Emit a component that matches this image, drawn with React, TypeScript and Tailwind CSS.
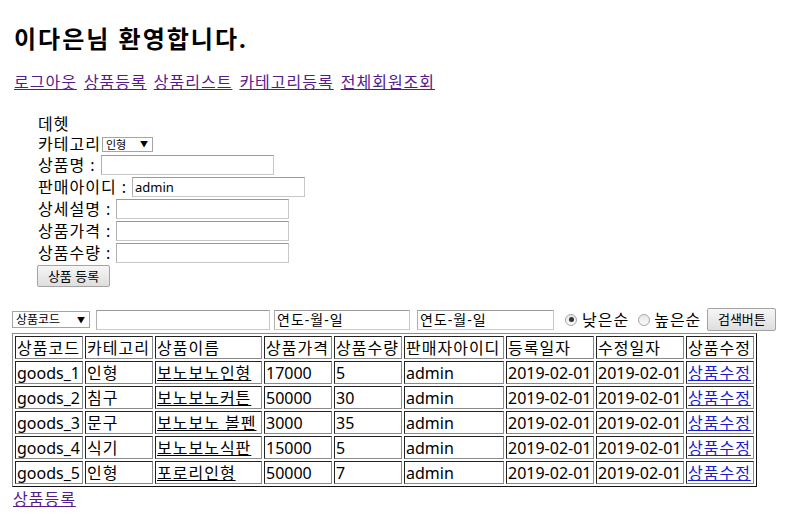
import React from "react";

/* ── data ── */

const NAV = ["로그아웃", "상품등록", "상품리스트", "카테고리등록", "전체회원조회"];

const HEAD = ["상품코드", "카테고리", "상품이름", "상품가격", "상품수량", "판매자아이디", "등록일자", "수정일자", "상품수정"];

const COLS = ["w-[68px]", "w-[68px]", "w-[107px]", "w-[68px]", "w-[68px]", "w-[100px]", "w-[88px]", "w-[88px]", "w-[68px]"];

const ROWS = [
  ["goods_1", "인형", "보노보노인형", "17000", "5"],
  ["goods_2", "침구", "보노보노커튼", "50000", "30"],
  ["goods_3", "문구", "보노보노 볼펜", "3000", "35"],
  ["goods_4", "식기", "보노보노식판", "15000", "5"],
  ["goods_5", "인형", "포로리인형", "50000", "7"],
];

const FIELDS = [
  { label: "상품명 :", value: "" },
  { label: "판매아이디 :", value: "admin" },
  { label: "상세설명 :", value: "" },
  { label: "상품가격 :", value: "" },
  { label: "상품수량 :", value: "" },
];

const CELL =
  "whitespace-nowrap border border-t-[#222] border-l-[#222] border-r-[#8a8a8a] border-b-[#8a8a8a] pt-[2px] pb-0 px-[1px] text-left font-normal leading-[19px]";

/* ── small controls in the old IE look ── */

function FakeSelect({ text, className }: { text: string; className: string }) {
  return (
    <div className={`flex items-center justify-between border border-[#a5a5a5] bg-white pl-[3px] pr-[4px] leading-none tracking-normal ${className}`}>
      <span>{text}</span>
      <span className="text-[8px]">▼</span>
    </div>
  );
}

function Box({ value, className }: { value: string; className: string }) {
  return (
    <input
      readOnly
      value={value}
      className={`h-[20px] border border-t-[#9a9a9a] border-l-[#b0b0b0] border-r-[#c8c8c8] border-b-[#c8c8c8] bg-white px-[2px] text-black outline-none ${className}`}
    />
  );
}

function Radio({ on }: { on: boolean }) {
  return (
    <span className="flex h-[12px] w-[12px] items-center justify-center rounded-full border border-[#a8a8a8] bg-gradient-to-b from-[#e6e6e6] to-[#fafafa]">
      {on && <span className="h-[5px] w-[5px] rounded-full bg-[#333]" />}
    </span>
  );
}

function OldButton({ text, className }: { text: string; className: string }) {
  return (
    <button className={`rounded-[2px] border border-[#a3a3a3] bg-gradient-to-b from-[#f6f6f6] to-[#dedede] text-[13px] leading-none tracking-normal text-black ${className}`}>
      {text}
    </button>
  );
}

export default function App() {
  return (
    <div className="min-h-[530px] bg-white px-[13px] pt-[24px] font-['Noto_Sans','Noto_Sans_CJK_KR',sans-serif] text-[16px] tracking-[1px] text-black">
      {/* ── heading ── */}
      <h1 className="pl-[1px] text-[24px] font-bold leading-[30px] tracking-[2px]">이다은님 환영합니다.</h1>

      {/* ── nav links ── */}
      <div className="mt-[18px] flex gap-[7px] pl-[1px] leading-[21px]">
        {NAV.map((n) => (
          <a key={n} href="#" className="text-[#551a8b] underline">
            {n}
          </a>
        ))}
      </div>

      {/* ── register form ── */}
      <div className="mt-[22px] flex flex-col pl-[25px] leading-[19px]">
        <div className="h-[19px]">데헷</div>
        <div className="flex h-[20px] items-center">
          <span>카테고리</span>
          <FakeSelect text="인형" className="ml-[1px] h-[15px] w-[51px] text-[11px]" />
        </div>
        {FIELDS.map((f) => (
          <div key={f.label} className="flex h-[22px] items-center">
            <span>{f.label}</span>
            <Box value={f.value} className="ml-[5px] w-[173px] text-[13px] tracking-normal" />
          </div>
        ))}
        <div className="pt-[1px]">
          <OldButton text="상품 등록" className="-ml-[1px] h-[22px] w-[73px]" />
        </div>
      </div>

      {/* ── search bar ── */}
      <div className="mt-[21px] flex h-[23px] items-center">
        <FakeSelect text="상품코드" className="-ml-[1px] h-[17px] w-[78px] text-[12px]" />
        <Box value="" className="ml-[6px] w-[174px]" />
        <Box value="연도-월-일" className="ml-[4px] w-[136px] text-[14px]" />
        <Box value="연도-월-일" className="ml-[7px] w-[137px] text-[14px]" />
        <span className="ml-[11px] flex items-center gap-[5px]">
          <Radio on />
          <span>낮은순</span>
        </span>
        <span className="ml-[9px] flex items-center gap-[4px]">
          <Radio on={false} />
          <span>높은순</span>
        </span>
        <OldButton text="검색버튼" className="ml-[6px] h-[23px] w-[69px]" />
      </div>

      {/* ── goods table ── */}
      <table className="mt-[2px] -ml-[1px] w-[745px] table-fixed border-separate border-spacing-[2px] border border-t-[#8a8a8a] border-l-[#8a8a8a] border-r-[#111] border-b-[#111]">
        <colgroup>
          {COLS.map((c, i) => (
            <col key={i} className={c} />
          ))}
        </colgroup>
        <tbody>
          <tr>
            {HEAD.map((h) => (
              <td key={h} className={CELL}>
                {h}
              </td>
            ))}
          </tr>
          {ROWS.map((r) => (
            <tr key={r[0]}>
              <td className={`${CELL} tracking-normal`}>{r[0]}</td>
              <td className={CELL}>{r[1]}</td>
              <td className={CELL}>
                <u>{r[2]}</u>
              </td>
              <td className={`${CELL} tracking-normal`}>{r[3]}</td>
              <td className={`${CELL} tracking-normal`}>{r[4]}</td>
              <td className={`${CELL} tracking-normal`}>admin</td>
              <td className={`${CELL} tracking-normal`}>2019-02-01</td>
              <td className={`${CELL} tracking-normal`}>2019-02-01</td>
              <td className={CELL}>
                <a href="#" className="text-[#1a1ad0] underline">
                  상품수정
                </a>
              </td>
            </tr>
          ))}
        </tbody>
      </table>

      <a href="#" className="text-[#551a8b] underline leading-[21px]">
        상품등록
      </a>
    </div>
  );
}
